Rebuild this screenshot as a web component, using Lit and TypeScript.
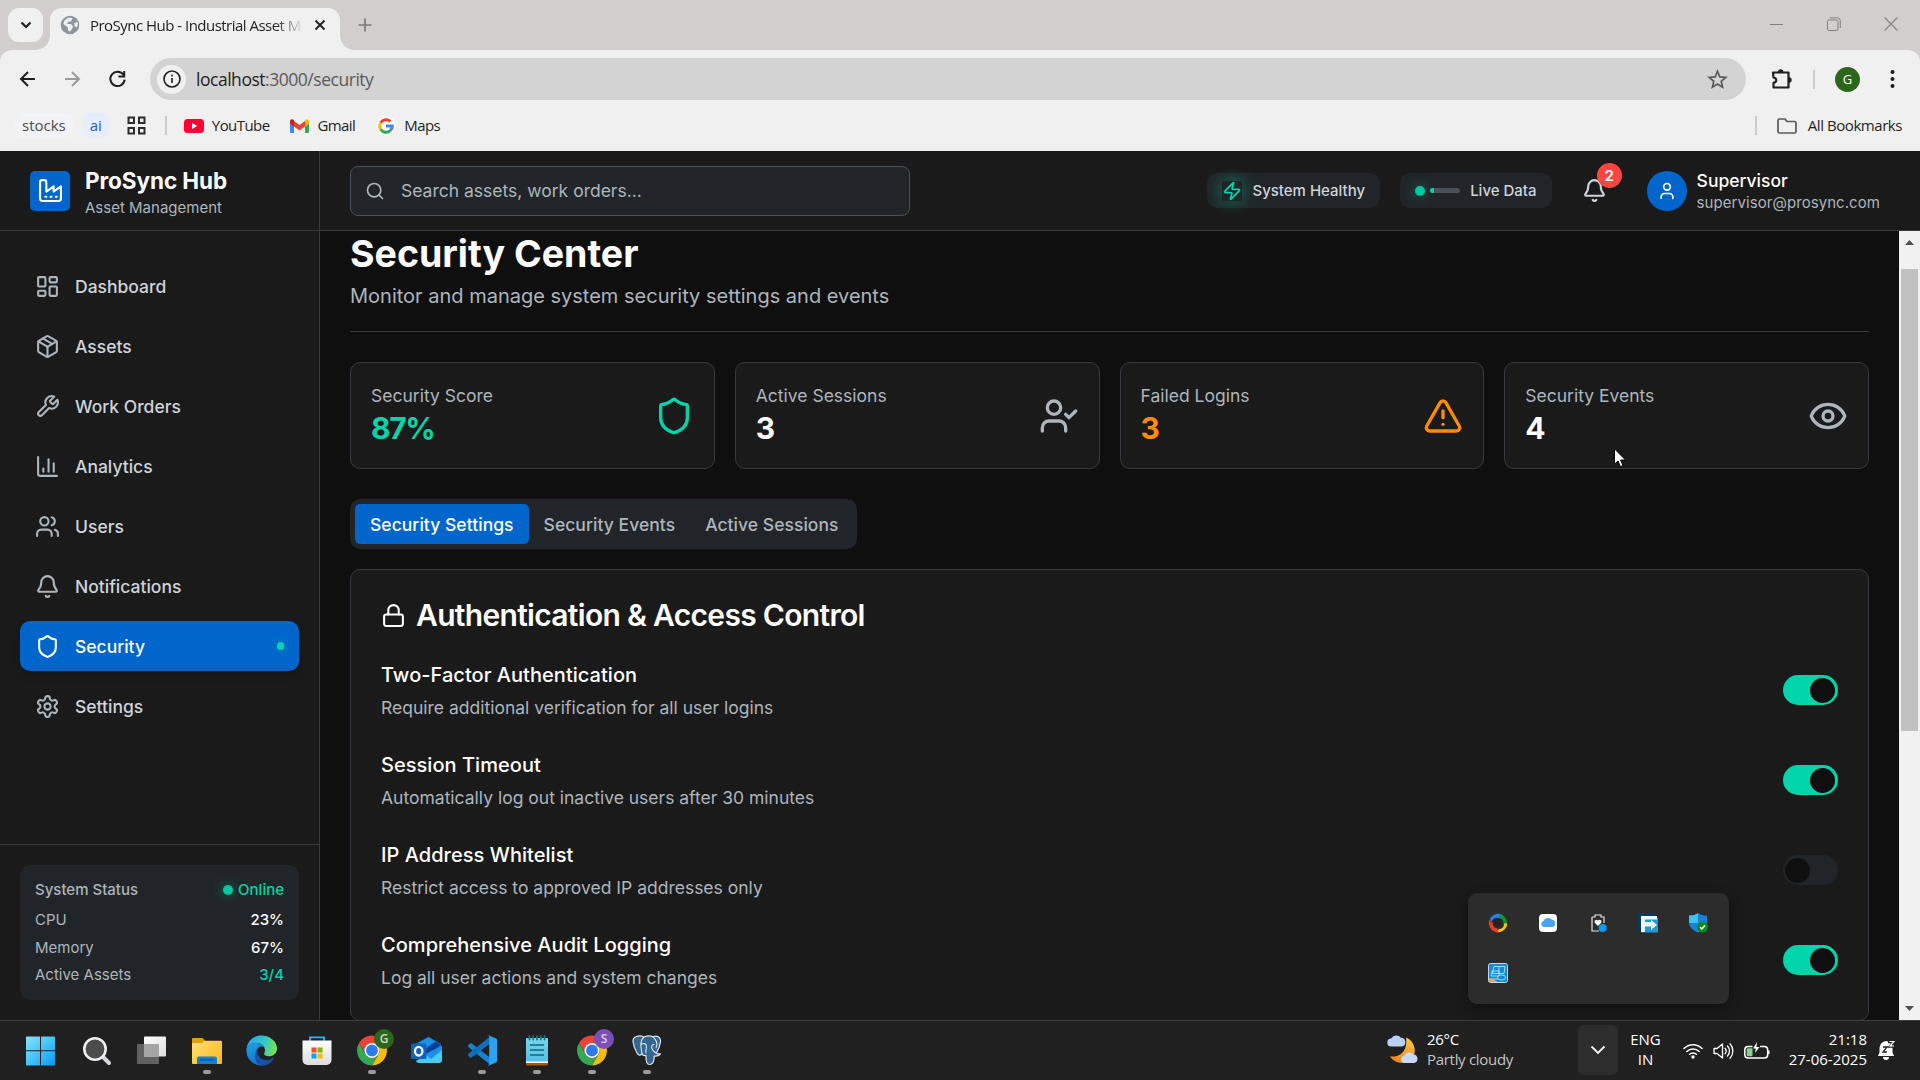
import { LitElement, html, svg, css, SVGTemplateResult } from "lit";
import { customElement } from "lit/decorators.js";
import { classMap } from "lit/directives/class-map.js";

const icons: Record<string, SVGTemplateResult> = {
  factory: svg`<path d="M2 20a2 2 0 0 0 2 2h16a2 2 0 0 0 2-2V8l-7 5V8l-7 5V4a2 2 0 0 0-2-2H4a2 2 0 0 0-2 2Z"/><path d="M17 18h1"/><path d="M12 18h1"/><path d="M7 18h1"/>`,
  dashboard: svg`<rect width="7" height="9" x="3" y="3" rx="1"/><rect width="7" height="5" x="14" y="3" rx="1"/><rect width="7" height="9" x="14" y="12" rx="1"/><rect width="7" height="5" x="3" y="16" rx="1"/>`,
  package: svg`<path d="M11 21.73a2 2 0 0 0 2 0l7-4A2 2 0 0 0 21 16V8a2 2 0 0 0-1-1.73l-7-4a2 2 0 0 0-2 0l-7 4A2 2 0 0 0 3 8v8a2 2 0 0 0 1 1.73z"/><path d="M12 22V12"/><path d="m3.3 7 7.703 4.734a2 2 0 0 0 1.994 0L20.7 7"/><path d="m7.5 4.27 9 5.15"/>`,
  wrench: svg`<path d="M14.7 6.3a1 1 0 0 0 0 1.4l1.6 1.6a1 1 0 0 0 1.4 0l3.77-3.77a6 6 0 0 1-7.94 7.94l-6.91 6.91a2.12 2.12 0 0 1-3-3l6.91-6.91a6 6 0 0 1 7.94-7.94l-3.76 3.76z"/>`,
  chart: svg`<path d="M3 3v16a2 2 0 0 0 2 2h16"/><path d="M18 17V9"/><path d="M13 17V5"/><path d="M8 17v-3"/>`,
  users: svg`<path d="M16 21v-2a4 4 0 0 0-4-4H6a4 4 0 0 0-4 4v2"/><circle cx="9" cy="7" r="4"/><path d="M22 21v-2a4 4 0 0 0-3-3.87"/><path d="M16 3.13a4 4 0 0 1 0 7.75"/>`,
  bell: svg`<path d="M10.268 21a2 2 0 0 0 3.464 0"/><path d="M3.262 15.326A1 1 0 0 0 4 17h16a1 1 0 0 0 .74-1.673C19.41 13.956 18 12.499 18 8A6 6 0 0 0 6 8c0 4.499-1.411 5.956-2.738 7.326"/>`,
  shield: svg`<path d="M20 13c0 5-3.5 7.5-7.66 8.95a1 1 0 0 1-.67-.01C7.5 20.5 4 18 4 13V6a1 1 0 0 1 1-1c2 0 4.5-1.2 6.24-2.72a1.17 1.17 0 0 1 1.52 0C14.51 3.81 17 5 19 5a1 1 0 0 1 1 1z"/>`,
  settings: svg`<path d="M12.22 2h-.44a2 2 0 0 0-2 2v.18a2 2 0 0 1-1 1.73l-.43.25a2 2 0 0 1-2 0l-.15-.08a2 2 0 0 0-2.73.73l-.22.38a2 2 0 0 0 .73 2.73l.15.1a2 2 0 0 1 1 1.72v.51a2 2 0 0 1-1 1.74l-.15.09a2 2 0 0 0-.73 2.73l.22.38a2 2 0 0 0 2.73.73l.15-.08a2 2 0 0 1 2 0l.43.25a2 2 0 0 1 1 1.73V20a2 2 0 0 0 2 2h.44a2 2 0 0 0 2-2v-.18a2 2 0 0 1 1-1.73l.43-.25a2 2 0 0 1 2 0l.15.08a2 2 0 0 0 2.73-.73l.22-.39a2 2 0 0 0-.73-2.73l-.15-.08a2 2 0 0 1-1-1.74v-.5a2 2 0 0 1 1-1.74l.15-.09a2 2 0 0 0 .73-2.73l-.22-.38a2 2 0 0 0-2.73-.73l-.15.08a2 2 0 0 1-2 0l-.43-.25a2 2 0 0 1-1-1.73V4a2 2 0 0 0-2-2z"/><circle cx="12" cy="12" r="3"/>`,
  search: svg`<circle cx="11" cy="11" r="8"/><path d="m21 21-4.3-4.3"/>`,
  zap: svg`<path d="M4 14a1 1 0 0 1-.78-1.63l9.9-10.2a.5.5 0 0 1 .86.46l-1.92 6.02A1 1 0 0 0 13 10h7a1 1 0 0 1 .78 1.63l-9.9 10.2a.5.5 0 0 1-.86-.46l1.92-6.02A1 1 0 0 0 11 14z"/>`,
  user: svg`<path d="M19 21v-2a4 4 0 0 0-4-4H9a4 4 0 0 0-4 4v2"/><circle cx="12" cy="7" r="4"/>`,
  userCheck: svg`<path d="m16 11 2 2 4-4"/><path d="M16 21v-2a4 4 0 0 0-4-4H6a4 4 0 0 0-4 4v2"/><circle cx="9" cy="7" r="4"/>`,
  alert: svg`<path d="m21.73 18-8-14a2 2 0 0 0-3.48 0l-8 14A2 2 0 0 0 4 21h16a2 2 0 0 0 1.73-3"/><path d="M12 9v4"/><path d="M12 17h.01"/>`,
  eye: svg`<path d="M2.062 12.348a1 1 0 0 1 0-.696 10.75 10.75 0 0 1 19.876 0 1 1 0 0 1 0 .696 10.75 10.75 0 0 1-19.876 0"/><circle cx="12" cy="12" r="3"/>`,
  lock: svg`<rect width="18" height="11" x="3" y="11" rx="2"/><path d="M7 11V7a5 5 0 0 1 10 0v4"/>`,
};

const icon = (name: string, cls: string) => html`
  <svg class="ico ${cls}" viewBox="0 0 24 24" fill="none" stroke="currentColor" stroke-width="2" stroke-linecap="round" stroke-linejoin="round">${icons[name]}</svg>`;

const glyph = (w: number, h: number, body: SVGTemplateResult) => html`
  <svg class="glyph" width=${w} height=${h} viewBox="0 0 ${w} ${h}" fill="none">${body}</svg>`;

const nav = [
  { label: "Dashboard", icon: "dashboard" },
  { label: "Assets", icon: "package" },
  { label: "Work Orders", icon: "wrench" },
  { label: "Analytics", icon: "chart" },
  { label: "Users", icon: "users" },
  { label: "Notifications", icon: "bell" },
  { label: "Security", icon: "shield", active: true },
  { label: "Settings", icon: "settings" },
];

const usage = [
  { label: "CPU", value: "23%", tone: "" },
  { label: "Memory", value: "67%", tone: "" },
  { label: "Active Assets", value: "3/4", tone: "good" },
];

const stats = [
  { label: "Security Score", value: "87%", icon: "shield", tone: "good", iconTone: "good" },
  { label: "Active Sessions", value: "3", icon: "userCheck", tone: "", iconTone: "soft" },
  { label: "Failed Logins", value: "3", icon: "alert", tone: "warn", iconTone: "warn" },
  { label: "Security Events", value: "4", icon: "eye", tone: "", iconTone: "soft" },
];

const tabs = ["Security Settings", "Security Events", "Active Sessions"];

const rules = [
  { title: "Two-Factor Authentication", text: "Require additional verification for all user logins", on: true },
  { title: "Session Timeout", text: "Automatically log out inactive users after 30 minutes", on: true },
  { title: "IP Address Whitelist", text: "Restrict access to approved IP addresses only", on: false },
  { title: "Comprehensive Audit Logging", text: "Log all user actions and system changes", on: true },
];

const chrome = svg`
  <g transform="translate(15 15.5)">
    <path fill="#ea4335" d="M-12.99-7.5A15 15 0 0 1 12.99-7.5H0A7.5 7.5 0 0 0-6.5 3.75Z"/>
    <path fill="#fbbc05" d="M12.99-7.5A15 15 0 0 1 0 15L6.5 3.75A7.5 7.5 0 0 0 0-7.5Z"/>
    <path fill="#34a853" d="M0 15A15 15 0 0 1-12.99-7.5L-6.5 3.75A7.5 7.5 0 0 0 6.5 3.75Z"/>
    <circle r="7.6" fill="#fff"/><circle r="5.9" fill="#2f7bea"/>
  </g>`;

const apps = [
  { open: false, art: glyph(31, 30, svg`
    <defs><linearGradient id="w" x1="0" y1="0" x2="30" y2="30" gradientUnits="userSpaceOnUse"><stop stop-color="#8be3fd"/><stop offset=".5" stop-color="#42c3fa"/><stop offset="1" stop-color="#0a93f5"/></linearGradient></defs>
    <path fill="url(#w)" d="M.7.5H14v13.800H0V1.200a.7.700 0 0 1 .7-.7ZM15 .5h13.300a.7.700 0 0 1 .7.700v13.100H15ZM0 15.300H14v14.200H.7a.7.700 0 0 1-.7-.7ZM15 15.300h14v13.500a.7.700 0 0 1-.7.700H15Z"/>`) },
  { open: false, art: glyph(30, 30, svg`
    <path d="M20 20l7 7" stroke="#d5d7da" stroke-width="4" stroke-linecap="round"/>
    <circle cx="13" cy="13" r="10.700" fill="#4c4c4c" stroke="#eceef0" stroke-width="2.600"/>`) },
  { open: false, art: glyph(30, 30, svg`
    <defs><linearGradient id="tv" x1="8" y1="0" x2="30" y2="21" gradientUnits="userSpaceOnUse"><stop stop-color="#fff"/><stop offset="1" stop-color="#dcdcdc"/></linearGradient></defs>
    <rect x="0" y="8" width="22" height="20" rx="1" fill="#616161"/>
    <rect x="7" y=".5" width="22" height="20" rx="1" fill="url(#tv)"/>
    <path d="M7 8h15v12.500H7z" fill="#a6a6a6"/>`) },
  { open: true, art: glyph(30, 30, svg`
    <defs><linearGradient id="fe" x1="0" y1="4" x2="26" y2="28" gradientUnits="userSpaceOnUse"><stop stop-color="#ffe07c"/><stop offset="1" stop-color="#fbbc20"/></linearGradient></defs>
    <path d="M0 3a1 1 0 0 1 1-1h9.500l3 3H20v6H0Z" fill="#e0a008"/>
    <path d="M0 7h10l3-2.300h16a1 1 0 0 1 1 1V27a1 1 0 0 1-1 1H1a1 1 0 0 1-1-1Z" fill="url(#fe)"/>
    <path d="M5 22.500a2 2 0 0 1 2-2h16a2 2 0 0 1 2 2V28H5Z" fill="#1280d3"/><path d="M8.500 23.800h13" stroke="#0b4f93" stroke-width="1.300"/>`) },
  { open: false, art: glyph(31, 31, svg`
    <defs>
      <linearGradient id="e1" x1="2" y1="8" x2="30" y2="14" gradientUnits="userSpaceOnUse"><stop stop-color="#29a6e8"/><stop offset=".5" stop-color="#30c4cf"/><stop offset="1" stop-color="#74e34c"/></linearGradient>
      <linearGradient id="e2" x1="2" y1="12" x2="16" y2="31" gradientUnits="userSpaceOnUse"><stop stop-color="#1e9be2"/><stop offset="1" stop-color="#0f66c4"/></linearGradient>
    </defs>
    <path fill="url(#e1)" d="M.5 14C1.500 5.500 8 .5 15.500.5 24 .5 31 6.500 31 13.500c0 4.500-3.500 7.800-8 7.800-3.200 0-5-1.200-5-2.300 0-.8 1-1.500 1-4 0-3.500-3.500-7-8.500-7C6 8 2 10.500.5 14Z"/>
    <path fill="url(#e2)" d="M.5 14C2 10 6.500 7.800 11 8c4 .2 7 2.500 7.700 5-.7-1-2-1.500-3.200-1.500-2.500 0-5 2.300-5 6.500 0 6 5 10.500 11.500 9-2.500 2.500-5 3.500-8 3.500C6 29.500-.3 22.500.5 14Z"/>
    <path fill="#1552a4" d="M12 13c-2 5 1 11.500 8 12 3 .2 5.500-1 7-2.200.6-.4 1.200.1.900.7C25.500 28 20.500 31 15.500 30.700 8 28.500 7.500 17.500 12 13Z"/>`) },
  { open: false, art: glyph(30, 30, svg`
    <defs><linearGradient id="st" x1="0" y1="5" x2="0" y2="30" gradientUnits="userSpaceOnUse"><stop stop-color="#fff"/><stop offset="1" stop-color="#dadada"/></linearGradient></defs>
    <path d="M8 6V1.400h14V6" stroke="#2cb2f3" stroke-width="1.800"/>
    <path d="M.5 4.500h29V24a5 5 0 0 1-5 5h-19a5 5 0 0 1-5-5Z" fill="url(#st)"/>
    <path d="M9.500 11.500h5v5h-5z" fill="#f25022"/><path d="M15.500 11.500h5v5h-5z" fill="#7fba00"/><path d="M9.500 17.500h5v5h-5z" fill="#00a4ef"/><path d="M15.500 17.500h5v5h-5z" fill="#ffb900"/>`) },
  { open: true, badge: "G", art: glyph(30, 31, chrome) },
  { open: false, art: glyph(31, 31, svg`
    <path d="M4 9 16.500 2.300a2 2 0 0 1 2 0L30 9v5L8 25Z" fill="#1273c9"/>
    <path d="M9 7.500 17.500 2.500l6 3.800L12 15Z" fill="#1c93e8"/><path d="M13 15 25 6.800 30 10 16 20Z" fill="#0b3f9e"/>
    <path d="M5 26 31 11v14a3 3 0 0 1-3 3H8a3 3 0 0 1-3-3Z" fill="#46cdf5"/><path d="M14 19 31 11v4L20 24Z" fill="#1f8fe6"/>
    <rect x="0" y="8.500" width="15.500" height="15.500" rx="1.500" fill="#0f62c0"/><ellipse cx="7.700" cy="16.200" rx="3.700" ry="4.300" stroke="#fff" stroke-width="2.300"/>`) },
  { open: true, art: glyph(30, 31, svg`
    <path d="M1 10.500 3 8.600a1.300 1.300 0 0 1 1.700 0L23 22.500v7L1.200 12Z" fill="#1583ce"/>
    <path d="M1 20.500 3 22.400a1.300 1.300 0 0 0 1.700 0L23 8.500v-7L1.200 19Z" fill="#0b71bd"/>
    <path d="M20.500 1 22 .5 29 3.500a1.500 1.500 0 0 1 1 1.400v21.200a1.500 1.500 0 0 1-1 1.400l-7 3-1.500-.5c.8.3 1.700-.2 1.700-1.300V2.300C22.200 1.200 21.300.7 20.500 1Z" fill="#27a4f2"/>`) },
  { open: true, art: glyph(24, 31, svg`
    <defs><linearGradient id="np" x1="0" y1="3" x2="0" y2="28" gradientUnits="userSpaceOnUse"><stop stop-color="#74d8ee"/><stop offset="1" stop-color="#55bfdf"/></linearGradient></defs>
    <rect x="1" y="22" width="22" height="8.500" rx="1" fill="#b0560f"/><path d="M1 24h22v4H1z" fill="#fff"/>
    <rect x="1" y="3" width="22" height="23.500" rx="1" fill="url(#np)"/>
    <path d="M4.500 1v3.500M8.200 1v3.500M12 1v3.500M15.800 1v3.500M19.500 1v3.500" stroke="#1c6c86" stroke-width="1.800" stroke-linecap="round"/>
    <path d="M5 10h14M5 15h14M5 20h14" stroke="#126481" stroke-width="1.700"/>`) },
  { open: true, badge: "S", art: glyph(30, 31, chrome) },
  { open: true, art: glyph(30, 31, svg`
    <path d="M4.500 1.500C7 .5 10 1 12 2c3-1.300 6-1.500 9-.3 3.500-1.500 8-.2 7.500 4.800-.4 4-2 8-4 11.500.5 1.300 2.500.8 4 .8-1.500 2-4 2.500-6.300 2.200-.2 3 .3 8-4 8.500-3.800.3-4.200-3-4.200-9-2 .5-3.500-.5-4-1.500C8 21 6.500 20.500 5 18 3 14.500 1.300 10 1 6.500c-.2-2.500 1.500-4.300 3.500-5Z" fill="#336791" stroke="#dfe6ec" stroke-width="1.200" stroke-linejoin="round"/>
    <path d="M12 2c-3 3-3.500 7-3 10 .4 2.300.5 5 1 7M21 1.800c3 3 5 7.500 3 11M9.200 9.500c2.500-1.800 5-1 5.200 1.500.2 3-1 4-.5 7M22 9.500c-2 0-2.500 1.500-2.200 3.500.3 2.200 2 3.500 4 5" stroke="#dfe6ec" stroke-width="1.100" stroke-linecap="round"/>`) },
];

const trayApps = [
  glyph(20, 20, svg`
    <path d="M2.200 5.500A9.200 9.200 0 0 1 15.500 2.500C14 3 12.800 4.300 12.600 5.600 9.500 4.200 5.500 4.500 3.500 8.500 2.500 8 2 7 2.200 5.500Z" fill="#2f7df6"/>
    <path d="M12 1.200A9.200 9.200 0 0 1 17.500 15c.3-1.500-.8-3-2-3.500C16 8.500 14.500 5.500 11 4.500Z" fill="#0b9a2a"/>
    <path d="M19.200 10.500A9.200 9.200 0 0 1 8 19c1.500-.3 2.500-1.500 2.700-3 3.300 0 5.500-2 5.300-5.500Z" fill="#fdc50b"/>
    <path d="M9.500 19.200A9.200 9.200 0 0 1 1.500 6.500C2 8 3 9 4.500 9.300 4.300 12.500 6 15.500 10.500 15.700Z" fill="#ee3a22"/><circle cx="10" cy="10" r="4" fill="#242424"/>`),
  glyph(20, 20, svg`<rect x="1" y="1" width="18" height="18" rx="4" fill="#fff"/>
    <path d="M6 14a3 3 0 0 1-.6-5.900A5 5 0 0 1 14 6.800a3.700 3.700 0 0 1 .6 7.200Z" fill="#4ba3f6"/>`),
  glyph(20, 20, svg`<path d="M4 4h3V2h6v2h3v6M4 4v14h7" stroke="#e6e6e6" stroke-width="1.200"/>
    <path d="M10 13 6.600 9.500a2 2 0 0 1 3.400-2 2 2 0 0 1 3.400 2Z" fill="#fff"/><circle cx="14.700" cy="15" r="4" fill="#0a9cf5"/>`),
  glyph(20, 20, svg`<rect width="18" height="18" fill="#063a5c"/><path d="M5 5h15v14.500H3Z" fill="#1e9ad6"/>
    <path d="M3 3h16v3.500H7V9h6V6.800l6 5.200-6 5v-3.500H7v5.500H3Z" fill="#eef6fb"/>`),
  glyph(20, 20, svg`<path d="M10 0c2.500 2 5 2.600 9 2.600V9c0 5-4 8.500-9 10.500C5 17.500 1 14 1 9V2.600C5 2.600 7.500 2 10 0Z" fill="#1583d8"/>
    <path d="M10 0v10H1V2.600C5 2.600 7.500 2 10 0Z" fill="#3fc0f5"/><circle cx="14.500" cy="14" r="5.500" fill="#108a1e"/>
    <path d="m12 14 1.800 1.900 3.200-3.500" stroke="#fff" stroke-width="1.500"/>`),
  glyph(20, 20, svg`<rect x=".5" y=".5" width="19" height="19" rx="2" fill="#1489d4" stroke="#c7d7e2"/>
    <path d="M1 15c3 1 6 2 9 4H1Z" fill="#f3a93b"/><path d="M6 3.500h11l-1 7H4.500ZM4 8h7v5H3ZM3 16h7M11 3v8" stroke="#b7e4fb" stroke-width=".9"/><ellipse cx="13.500" cy="14.500" rx="4" ry="2.600" stroke="#b7e4fb" stroke-width=".9"/>`),
];

@customElement("app-root")
export class AppRoot extends LitElement {
  static styles = css`
    :host { display: block; width: 1920px; height: 1080px; overflow: hidden; position: relative; background: #0f0f0f; font-family: Inter, sans-serif; color: #fff; }
    * { box-sizing: border-box; }
    .screen { display: grid; grid-template-rows: 151px 869px 60px; height: 1080px; }
    svg { display: block; flex: none; }
    .row { display: flex; align-items: center; }
    .good { color: #00d4aa; } .warn { color: #ff8c00; } .soft { color: #adb5bd; }
    .i20 { width: 20px; height: 20px; } .i25 { width: 25px; height: 25px; } .i40 { width: 40px; height: 40px; }

    /* browser frame */
    .browser { background: #d2cece; color: #1f1f1f; font-family: "Open Sans", "Noto Sans", sans-serif; font-size: 15px; }
    .strip { display: flex; height: 50px; padding: 8px 0 0 8px; }
    .tabmenu { width: 35px; height: 34px; border-radius: 11px; background: #f0f0f0; display: grid; place-items: center; }
    .tab { margin: 0 0 0 7px; width: 290px; height: 42px; background: #f0f0f0; border-radius: 12px 12px 0 0; padding: 0 14px 8px 10px; position: relative; gap: 10px; }
    .tab::before, .tab::after { content: ""; position: absolute; bottom: 0; width: 14px; height: 14px; }
    .tab::before { left: -14px; background: radial-gradient(circle at 0 0, transparent 13.500px, #f0f0f0 14px); }
    .tab::after { right: -14px; background: radial-gradient(circle at 100% 0, transparent 13.500px, #f0f0f0 14px); }
    .tabtitle { width: 220px; white-space: nowrap; letter-spacing: -0.52px; -webkit-mask-image: linear-gradient(90deg, #000 185px, transparent 214px); mask-image: linear-gradient(90deg, #000 185px, transparent 214px); }
    .closer { margin-left: auto; }
    .newtab { margin: 10px 0 0 18px; }
    .winctl { margin: 8px 22px 0 auto; display: flex; gap: 43px; height: 16px; align-items: center; }
    .toolbar { background: #f0f0f0; border-radius: 12px 12px 0 0; height: 50px; display: flex; align-items: center; padding: 8px 20px 0 18px; }
    .navbtns { display: flex; gap: 25px; align-items: center; width: 132px; }
    .omni { width: 1596px; height: 42px; border-radius: 21px; background: #d3d3d3; display: flex; align-items: center; padding: 0 18px 0 7px; font-size: 17.500px; color: #5a5a5a; letter-spacing: -0.47px; }
    .omni b { font-weight: 400; color: #1f1f1f; }
    .info { width: 29px; height: 29px; border-radius: 50%; background: #f0f0f0; display: grid; place-items: center; margin-right: 10px; }
    .star { margin-left: auto; }
    .ext { margin-left: 25px; } .vsep { width: 2px; height: 19px; background: #cfcaca; margin: 0 20px 0 20px; }
    .me { width: 25px; height: 25px; border-radius: 50%; background: #2c661a; color: #fff; font-size: 13px; display: grid; place-items: center; margin-right: 30px; }
    .marks { background: #f0f0f0; height: 51px; display: flex; align-items: center; padding: 0 18px 0 15px; letter-spacing: -0.58px; }
    .chip { height: 25px; border-radius: 8px; padding: 0 7px; line-height: 24px; background: #f1f3f7; color: #4a4d52; letter-spacing: 0; }
    .chip.blue { margin-left: 10px; background: #e6edfc; color: #2b59c8; }
    .grid4 { margin-left: 18px; }
    .msep { width: 2px; height: 19px; background: #cfcaca; margin: 0 17px 0 19px; }
    .msep.end { margin: 0 20px 0 auto; }
    .mark { display: flex; align-items: center; gap: 8px; margin-right: 21px; }
    .mark span { line-height: 20px; padding-bottom: 2px; }
    .marks .all { margin: 0; gap: 11px; letter-spacing: -0.44px; }

    /* application */
    .app { display: grid; grid-template-columns: 320px 1fr; min-height: 0; }
    .side { background: #1a1a1a; border-right: 1px solid #343a40; display: flex; flex-direction: column; }
    .brand { height: 80px; border-bottom: 1px solid #343a40; padding-left: 30px; display: flex; align-items: center; gap: 15px; }
    .logo { width: 40px; height: 40px; border-radius: 5px; background: #0066cc; display: grid; place-items: center; }
    .bname { font-weight: 700; font-size: 22.500px; line-height: 35px; letter-spacing: -0.06px; }
    .bsub { font-size: 15px; line-height: 20px; color: #adb5bd; }
    .nav { padding: 30px 20px 0; display: flex; flex-direction: column; gap: 10px; flex: 1; }
    .nitem { height: 50px; border-radius: 10px; padding: 0 15px; display: flex; align-items: center; gap: 15px; font-size: 17.500px; font-weight: 500; color: #ced4da; }
    .nitem .ico { color: #adb5bd; }
    .nitem.on { background: #0066cc; color: #fff; box-shadow: 0 4px 8px rgba(0,0,0,.15); }
    .nitem.on .ico { color: #fff; }
    .pip { margin-left: auto; width: 7.500px; height: 7.500px; border-radius: 50%; background: #00d4aa; box-shadow: 0 0 10px rgba(0,212,170,.4); }
    .foot { border-top: 1px solid #343a40; padding: 20px 20px 20px; }
    .status { background: #212529; border-radius: 10px; padding: 15px; display: flex; flex-direction: column; gap: 7.500px; height: 135px; font-size: 15px; line-height: 20px; color: #adb5bd; }
    .line { display: flex; justify-content: space-between; font-weight: 400; }
    .line.head { font-weight: 500; margin-bottom: 2.500px; }
    .line .val { font-weight: 500; color: #fff; } .line .val.good { color: #00d4aa; }
    .online { display: flex; align-items: center; gap: 5px; color: #00d4aa; }
    .dot { width: 10px; height: 10px; border-radius: 50%; background: #00c8a1; box-shadow: 0 0 12px rgba(0,212,170,.5); }

    .body { display: grid; grid-template-rows: 80px 789px; min-width: 0; }
    .top { background: #1a1a1a; border-bottom: 1px solid #343a40; padding: 0 40px 0 30px; display: flex; align-items: center; }
    .search { width: 560px; height: 50px; border: 1px solid #495057; border-radius: 8px; background: #212529; display: flex; align-items: center; gap: 16px; padding-left: 14px; font-size: 17.500px; color: #adb5bd; margin-right: auto; }
    .pill { height: 35px; border-radius: 10px; background: #212529; display: flex; align-items: center; padding: 0 15px; gap: 10px; font-size: 15px; font-weight: 500; color: #ced4da; margin-right: 20px; }
    .pulse { display: flex; align-items: center; gap: 5px; }
    .glow { box-shadow: 0 0 16px rgba(0,212,170,.5); background: #212529; }
    .bar { width: 30px; height: 5px; border-radius: 3px; background: #495057; overflow: hidden; }
    .fill { height: 5px; background: #00d4aa; }
    .bellwrap { position: relative; margin: 0 40px 0 10px; color: #ced4da; }
    .count { position: absolute; left: 15px; top: -15px; width: 25px; height: 25px; border-radius: 50%; background: #ff4444; color: #fff; font-size: 15px; font-weight: 600; display: grid; place-items: center; }
    .avatar { width: 40px; height: 40px; border-radius: 50%; background: #0066cc; display: grid; place-items: center; margin-right: 10px; }
    .uname { font-size: 17.500px; line-height: 25px; font-weight: 500; }
    .umail { font-size: 15px; line-height: 20px; color: #adb5bd; letter-spacing: 0.06px; }

    .view { display: grid; grid-template-columns: 1fr 21px; min-height: 0; }
    .content { overflow: hidden; padding: 0 30px; }
    .pagehead { height: 101px; border-bottom: 1px solid #343a40; margin-bottom: 30px; }
    h1 { margin: 0; font-size: 37.500px; line-height: 45px; font-weight: 700; letter-spacing: 0; }
    .lead { font-size: 20px; line-height: 30px; margin-top: 5px; color: #adb5bd; }
    .cards { display: grid; grid-template-columns: repeat(4, 1fr); gap: 20px; }
    .card { height: 107px; background: #1a1a1a; border: 1px solid #343a40; border-radius: 10px; padding: 20px; display: flex; justify-content: space-between; align-items: center; }
    .clabel { font-size: 17.500px; line-height: 25px; color: #adb5bd; }
    .cval { font-size: 30px; line-height: 40px; font-weight: 700; letter-spacing: -1.300px; }
    .tabs { width: 507px; height: 50px; margin: 30px 0 20px; background: #212529; border-radius: 10px; padding: 5px; display: flex; }
    .tb { height: 40px; border-radius: 5px; padding: 0 15px; line-height: 41px; font-size: 17.500px; font-weight: 500; letter-spacing: 0.04px; color: #adb5bd; white-space: nowrap; }
    .tb.on { background: #0066cc; color: #fff; }
    .panel { height: 452px; background: #1a1a1a; border: 1px solid #343a40; border-radius: 10px; padding: 30px; }
    .ptitle { display: flex; align-items: center; gap: 10px; height: 30px; font-size: 30px; line-height: 30px; font-weight: 600; letter-spacing: -0.69px; margin-bottom: 30px; }
    .rules { display: flex; flex-direction: column; gap: 30px; }
    .rule { display: flex; justify-content: space-between; align-items: center; height: 60px; }
    .rt { font-size: 20px; line-height: 30px; font-weight: 500; letter-spacing: 0.04px; }
    .rd { font-size: 17.500px; line-height: 25px; margin-top: 5px; color: #adb5bd; }
    .switch { width: 55px; height: 30px; border-radius: 15px; background: #212529; padding: 2.500px 3px 2.500px 2px; display: flex; }
    .switch.on { background: #00d4aa; justify-content: flex-end; }
    .knob { width: 25px; height: 25px; border-radius: 50%; background: #0f0f0f; }
    .scroll { background: #f1f1f1; display: flex; flex-direction: column; align-items: center; padding: 9px 0 9px; }
    .thumb { width: 17px; height: 462px; background: #c1c1c1; margin: 24px 0 auto; }

    /* desktop */
    .task { background: #202020; border-top: 1px solid #3d3d3d; display: flex; padding-left: 14px; font-family: "Open Sans", "Noto Sans", sans-serif; font-size: 15px; line-height: 20px; letter-spacing: -0.3px; }
    .app-slot { width: 55px; height: 59px; padding-top: 14px; display: flex; flex-direction: column; align-items: center; position: relative; }
    .art { height: 31px; display: flex; align-items: center; }
    .run { width: 8px; height: 4px; border-radius: 2px; background: #9b9b9b; margin-top: 4px; }
    .tag { position: absolute; left: 30px; top: 8px; width: 20px; height: 20px; border-radius: 50%; background: #2c661a; color: #c9d6c4; font: 600 12px/20px "Open Sans", sans-serif; text-align: center; }
    .tag.s { background: #7b4fb8; color: #dccdf0; }
    .weather { display: flex; align-items: center; gap: 9px; margin-left: 713px; width: 191px; height: 56px; }
    .weather .sub { color: #c4c4c4; }
    .chev { width: 40px; height: 50px; margin-top: 4px; border-radius: 6px; background: #2d2d2d; display: grid; place-items: center; }
    .lang { width: 55px; text-align: center; padding-top: 8px; letter-spacing: 0; }
    .sys { display: flex; align-items: center; gap: 10px; margin-left: 10px; }
    .clock { margin-left: auto; text-align: right; padding-top: 8px; letter-spacing: 0; }
    .dnd { margin: 19px 25px 0 10px; }
    .tray { position: absolute; left: 1468px; top: 893px; width: 261px; height: 111px; border-radius: 9px; background: #2c2c2c; box-shadow: 0 4px 12px rgba(0,0,0,.4); padding: 5px; display: grid; grid-template-columns: repeat(5, 50px); grid-auto-rows: 50px; place-items: center; }
    .pointer { position: absolute; left: 1614px; top: 448px; }
  `;

  private renderBrowser() {
    return html`
      <div class="browser">
        <div class="strip">
          <div class="tabmenu">${glyph(12, 8, svg`<path d="m1.500 1.500 4.500 4.500 4.500-4.500" stroke="#1f1f1f" stroke-width="2.200"/>`)}</div>
          <div class="tab row">
            ${glyph(20, 20, svg`<circle cx="10" cy="10" r="9.300" fill="#8f979e"/><path d="M8 3c2-.5 3.500-.5 4.500.5L11 6.500H8.500L7 9h4l2 2.500-1 2.500-2 2.500-2-1v-3L3.500 9c0-3 2-5 4.500-6ZM14.500 8l3-1c.5 2 .3 4-.7 5.500L14.500 11Z" fill="#f0f0f0"/>`)}
            <div class="tabtitle">ProSync Hub - Industrial Asset M</div>
            <div class="closer">${glyph(12, 12, svg`<path d="m1.500 1.500 9 9m0-9-9 9" stroke="#1f1f1f" stroke-width="1.900"/>`)}</div>
          </div>
          <div class="newtab">${glyph(14, 14, svg`<path d="M7 .5v13M.5 7h13" stroke="#7b7979" stroke-width="1.700"/>`)}</div>
          <div class="winctl">
            ${glyph(14, 14, svg`<path d="M0 7.500h13" stroke="#828080"/>`)}
            ${glyph(14, 14, svg`<rect x=".5" y="3" width="10.500" height="10.500" rx="1.500" stroke="#828080"/><path d="M3 .9h7.500a2.800 2.800 0 0 1 2.800 2.800V11" stroke="#828080"/>`)}
            ${glyph(14, 14, svg`<path d="m.5.5 13 13m0-13-13 13" stroke="#828080" stroke-width="1.100"/>`)}
          </div>
        </div>
        <div class="toolbar">
          <div class="navbtns">
            ${glyph(20, 18, svg`<path d="M17 9H3m7-7L3 9l7 7" stroke="#1f1f1f" stroke-width="2"/>`)}
            ${glyph(20, 18, svg`<path d="M2 9h14M9 2l7 7-7 7" stroke="#9a9a9a" stroke-width="2"/>`)}
            ${glyph(20, 20, svg`<path d="M15.500 5.800A7.200 7.200 0 1 0 16.700 10.700M16.200 2v5.500H10.500" stroke="#1f1f1f" stroke-width="2"/>`)}
          </div>
          <div class="omni">
            <div class="info">${glyph(18, 18, svg`<circle cx="9" cy="9" r="8" stroke="#1f1f1f" stroke-width="1.600"/><path d="M9 8v5M9 4.800v1.800" stroke="#1f1f1f" stroke-width="1.600"/>`)}</div>
            <b>localhost</b>:3000/security
            <div class="star">${glyph(21, 21, svg`<path d="m10.500 2.300 2.300 5.600 6 .5-4.600 3.900 1.400 5.900-5.100-3.200-5.100 3.200 1.400-5.900-4.600-3.900 6-.5Z" stroke="#5a5a5a" stroke-width="1.700"/>`)}</div>
          </div>
          <div class="ext">${glyph(22, 24, svg`<path d="M2 5.500h15.500v15H2.500v-4.600c3.600-.6 3.600-4.800 0-5.400Z" stroke="#1f1f1f" stroke-width="2.200" stroke-linejoin="round"/><path d="M7 5a2.700 2.700 0 0 1 5.400 0ZM18 10.300a2.700 2.700 0 0 1 0 5.400Z" fill="#1f1f1f"/>`)}</div>
          <div class="vsep"></div>
          <div class="me">G</div>
          ${glyph(5, 18, svg`<circle cx="2.500" cy="2" r="2" fill="#1f1f1f"/><circle cx="2.500" cy="9" r="2" fill="#1f1f1f"/><circle cx="2.500" cy="16" r="2" fill="#1f1f1f"/>`)}
        </div>
        <div class="marks">
          <div class="chip">stocks</div>
          <div class="chip blue">ai</div>
          <div class="grid4">${glyph(19, 19, svg`<path d="M1.500 1.500h5.500v5.500H1.500ZM12 1.500h5.500v5.500H12ZM1.500 12h5.500v5.500H1.500ZM12 12h5.500v5.500H12Z" stroke="#2b2b2b" stroke-width="2"/>`)}</div>
          <div class="msep"></div>
          <div class="mark">${glyph(20, 14, svg`<rect width="20" height="14" rx="3.500" fill="#ff0033"/><path d="m8 4 5.200 3L8 10Z" fill="#fff"/>`)}<span>YouTube</span></div>
          <div class="mark">${glyph(19, 14, svg`<path d="M0 2v10.800A1.200 1.200 0 0 0 1.200 14H4V5Z" fill="#4285f4"/><path d="M19 2v10.800a1.200 1.200 0 0 1-1.200 1.200H15V5Z" fill="#34a853"/><path d="M4 2 9.500 6 15 2v5.500l-5.500 4L4 7.500Z" fill="#ea4335"/><path d="M0 2.500C0 .3 2 -.5 4 1v6.500L0 4.500Z" fill="#c5221f"/><path d="M19 2.500C19 .3 17-.5 15 1v6.500l4-3Z" fill="#fbbc04"/>`)}<span>Gmail</span></div>
          <div class="mark">${glyph(20, 20, svg`<circle cx="10" cy="10" r="10" fill="#fff"/><g stroke-width="3"><path d="M4.600 6.800A6.300 6.300 0 0 1 14.400 5.500" stroke="#ea4335"/><path d="M4.600 13.200a6.300 6.300 0 0 1 0-6.400" stroke="#fbbc05"/><path d="M14.300 14.600A6.300 6.300 0 0 1 4.600 13.200" stroke="#34a853"/><path d="M10 10.100h6.300a6.300 6.300 0 0 1-2 4.500" stroke="#4285f4"/></g>`)}<span>Maps</span></div>
          <div class="msep end"></div>
          <div class="mark all">${glyph(20, 16, svg`<path d="M1 2.500A1.500 1.500 0 0 1 2.500 1H8l2 2.500h7.500A1.500 1.500 0 0 1 19 5v8.500a1.500 1.500 0 0 1-1.500 1.500h-15A1.500 1.500 0 0 1 1 13.500Z" stroke="#5a5a5a" stroke-width="1.700"/>`)}<span>All Bookmarks</span></div>
        </div>
      </div>`;
  }

  private renderSide() {
    return html`
      <div class="side">
        <div class="brand">
          <div class="logo">${icon("factory", "i25")}</div>
          <div><div class="bname">ProSync Hub</div><div class="bsub">Asset Management</div></div>
        </div>
        <div class="nav">
          ${nav.map((n) => html`
            <div class=${classMap({ nitem: true, on: !!n.active })}>
              ${icon(n.icon, "i25")}<span>${n.label}</span>${n.active ? html`<span class="pip"></span>` : ""}
            </div>`)}
        </div>
        <div class="foot">
          <div class="status">
            <div class="line head"><span>System Status</span><span class="online"><span class="dot"></span>Online</span></div>
            ${usage.map((u) => html`<div class="line"><span>${u.label}</span><span class="val ${u.tone}">${u.value}</span></div>`)}
          </div>
        </div>
      </div>`;
  }

  private renderTop() {
    return html`
      <div class="top">
        <div class="search">${icon("search", "i20")}<span>Search assets, work orders...</span></div>
        <div class="pill">${icon("zap", "i20 good glow")}<span>System Healthy</span></div>
        <div class="pill"><span class="pulse"><span class="dot"></span><span class="bar"><div class="fill" style="width:4px"></div></span></span><span>Live Data</span></div>
        <div class="bellwrap">${icon("bell", "i25")}<span class="count">2</span></div>
        <div class="avatar">${icon("user", "i20")}</div>
        <div><div class="uname">Supervisor</div><div class="umail">supervisor@prosync.com</div></div>
      </div>`;
  }

  private renderView() {
    return html`
      <div class="view">
        <div class="content">
          <div class="pagehead"><h1>Security Center</h1><div class="lead">Monitor and manage system security settings and events</div></div>
          <div class="cards">
            ${stats.map((s) => html`
              <div class="card">
                <div><div class="clabel">${s.label}</div><div class="cval ${s.tone}">${s.value}</div></div>
                ${icon(s.icon, "i40 " + s.iconTone)}
              </div>`)}
          </div>
          <div class="tabs">${tabs.map((t, i) => html`<div class=${classMap({ tb: true, on: i === 0 })}>${t}</div>`)}</div>
          <div class="panel">
            <div class="ptitle">${icon("lock", "i25")}<span>Authentication &amp; Access Control</span></div>
            <div class="rules">
              ${rules.map((r) => html`
                <div class="rule">
                  <div><div class="rt">${r.title}</div><div class="rd">${r.text}</div></div>
                  <div class=${classMap({ switch: true, on: r.on })}><div class="knob"></div></div>
                </div>`)}
            </div>
          </div>
        </div>
        <div class="scroll">
          ${glyph(9, 5, svg`<path d="M4.500 0 9 5H0Z" fill="#505050"/>`)}
          <div class="thumb"></div>
          ${glyph(9, 5, svg`<path d="M0 0h9L4.500 5Z" fill="#505050"/>`)}
        </div>
      </div>`;
  }

  private renderTaskbar() {
    return html`
      <div class="task">
        ${apps.map((a) => html`
          <div class="app-slot">
            <div class="art">${a.art}</div>
            ${a.open ? html`<div class="run"></div>` : ""}
            ${a.badge ? html`<div class=${classMap({ tag: true, s: a.badge === "S" })}>${a.badge}</div>` : ""}
          </div>`)}
        <div class="weather">
          ${glyph(31, 31, svg`
            <defs><linearGradient id="mn" x1="20" y1="2" x2="12" y2="30" gradientUnits="userSpaceOnUse"><stop stop-color="#ffcb45"/><stop offset="1" stop-color="#f07f1e"/></linearGradient></defs>
            <path d="M19 3.500a14 14 0 0 1 8 17.500c-3.500 9-17 11.500-24 1.500 9 1 18-4 16-19Z" fill="url(#mn)"/>
            <path d="M4.500 12.500a4 4 0 0 1-.3-8A6 6 0 0 1 14 3.800a4.400 4.400 0 0 1 .8 8.700Z" fill="#b9d0f6"/>
            <path d="M17.500 29a3.800 3.800 0 0 1-.3-7.500 5.500 5.500 0 0 1 9.300-1 4.300 4.300 0 0 1 .5 8.500Z" fill="#c6d9f8"/>`)}
          <div><div>26°C</div><div class="sub">Partly cloudy</div></div>
        </div>
        <div class="chev">${glyph(16, 10, svg`<path d="m1.500 1.500 6.500 6.500 6.500-6.500" stroke="#fff" stroke-width="1.800"/>`)}</div>
        <div class="lang">ENG<br />IN</div>
        <div class="sys">
          ${glyph(20, 17, svg`<g stroke="#fff" stroke-width="1.500" stroke-linecap="round"><path d="M1 6.500a12.700 12.700 0 0 1 18 0M3.800 9.500a8.800 8.800 0 0 1 12.400 0M6.600 12.300a4.800 4.800 0 0 1 6.800 0"/></g><circle cx="10" cy="15" r="1.700" fill="#fff"/>`)}
          ${glyph(21, 18, svg`<path d="M1 6.500h3L9.500 2v14L4 11.500H1Z" stroke="#fff" stroke-width="1.300" stroke-linejoin="round"/><path d="M12 6.300a4 4 0 0 1 0 5.400M14.500 4a7.300 7.300 0 0 1 0 10M17 1.800a10.500 10.500 0 0 1 0 14.400" stroke="#fff" stroke-width="1.300" stroke-linecap="round"/>`)}
          ${glyph(26, 18, svg`<path d="M8.500 4.500H4A3.300 3.300 0 0 0 .8 7.700v5A3.300 3.300 0 0 0 4 16h16.500a3.300 3.300 0 0 0 3.200-3.300v-5a3.300 3.300 0 0 0-3.200-3.200H16" stroke="#fff" stroke-width="1.500"/><path d="M24.800 8.500v3.500" stroke="#fff" stroke-width="1.400"/><rect x="2.700" y="6.300" width="5.800" height="8" rx="1" fill="#8bd48c"/><path d="M13 0 9 6.500h2.800L11 11l4.500-6H12.500Z" fill="#fff"/>`)}
        </div>
        <div class="clock">21:18<br />27-06-2025</div>
        <div class="dnd">${glyph(18, 20, svg`<path d="M9 1a7 7 0 0 1 6.500 7v4.500L17 16H1l1.500-3.500V8A7 7 0 0 1 9 1ZM6 17h6a3 3 0 0 1-6 0Z" fill="#fff"/><path d="M6 7h4l-4 5h4M11 2.500h4.500L11.500 7H16" stroke="#202020" stroke-width="1.300"/><path d="M12.500 1.500H17l-4 4.500h4" stroke="#fff" stroke-width="1.200"/>`)}</div>
      </div>`;
  }

  render() {
    return html`
      <div class="screen">
        ${this.renderBrowser()}
        <div class="app">
          ${this.renderSide()}
          <div class="body">${this.renderTop()}${this.renderView()}</div>
        </div>
        ${this.renderTaskbar()}
      </div>
      <div class="tray">${trayApps}</div>
      <div class="pointer">${glyph(13, 20, svg`<path d="M.5.8v15.400l3.500-3.300 2.400 5.800 2.600-1.100-2.400-5.600h4.900Z" fill="#fff" stroke="#000"/>`)}</div>`;
  }
}
